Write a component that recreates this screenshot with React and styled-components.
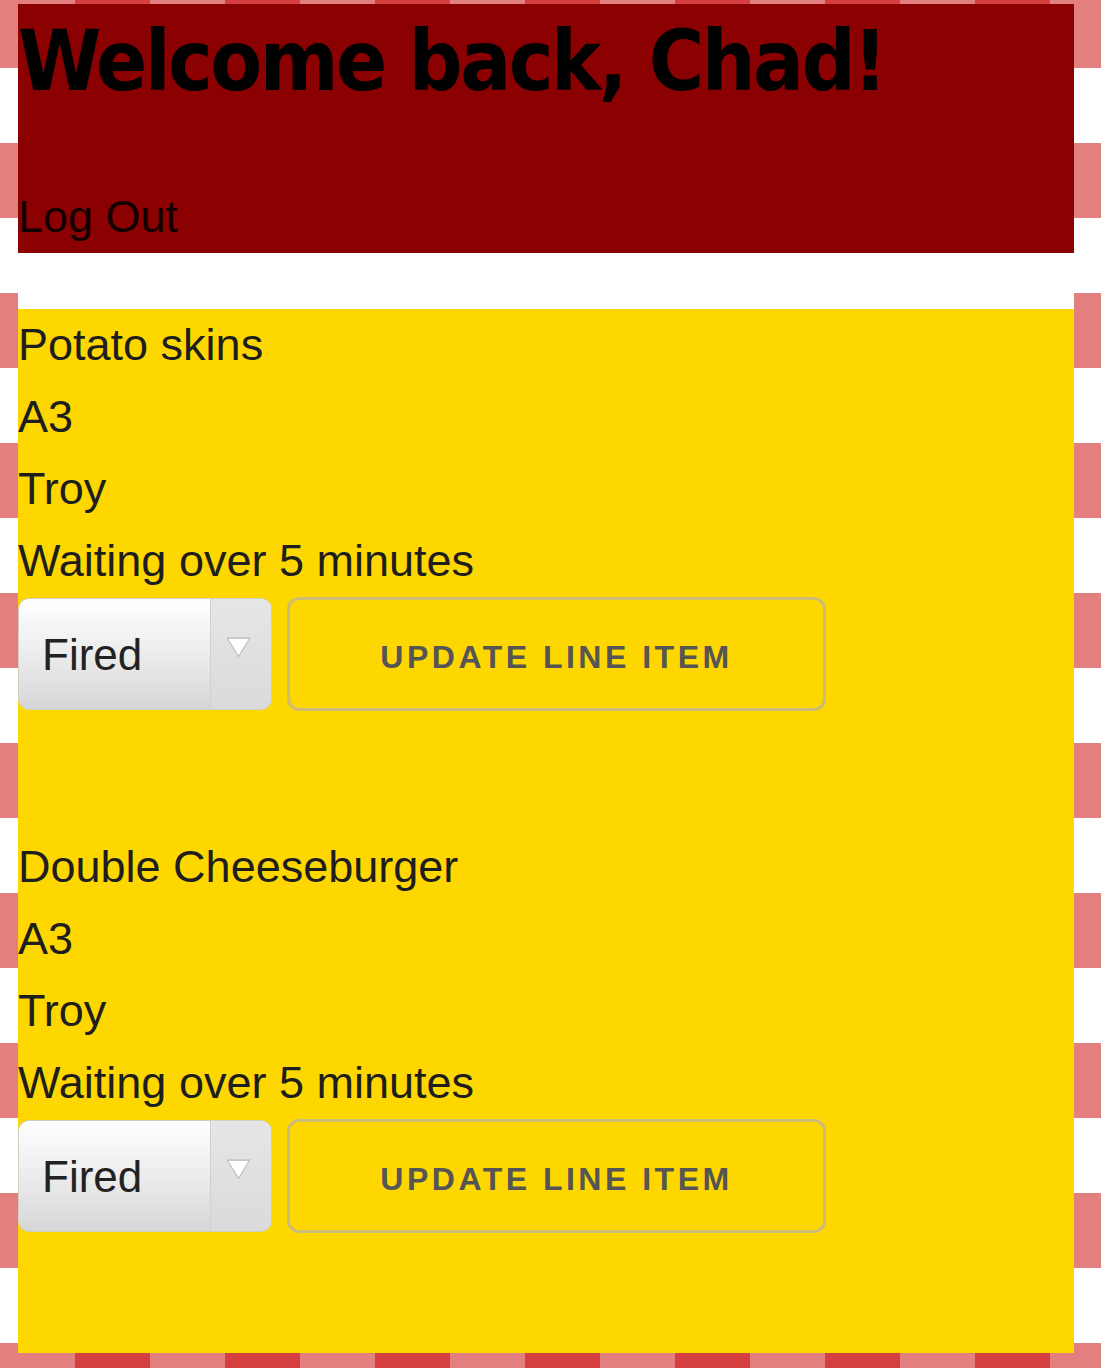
import React from 'react'
import styled, { createGlobalStyle } from 'styled-components'

const GlobalStyle = createGlobalStyle`
html {
  min-height: 100%;
  background-color: #fff;
  background-image:
    linear-gradient(to bottom, rgba(200, 0, 0, 0.5) 50%, transparent 50%),
    linear-gradient(to right, transparent 50%, rgba(200, 0, 0, 0.5) 50%);
  background-size: 150px 150px;
  background-position: 0 -7px, 0 0;
}
body {
  margin: 4px 27px 0 18px;
  font-family: "Liberation Sans", Arial, sans-serif;
}
`

const Page = styled.div`
background: #fff;
display: flex;
flex-direction: column;
gap: 56px;
`

const Header = styled.header`
background: #8b0000;
display: flex;
flex-direction: column;
align-items: flex-start;
padding: 15px 0 11px;
`

const Title = styled.h1`
margin: 0 0 89px;
font-family: "DejaVu Sans Condensed", "DejaVu Sans", sans-serif;
font-stretch: condensed;
font-weight: bold;
font-size: 84px;
line-height: 84px;
letter-spacing: -2.5px;
color: #000;
`

const LogOut = styled.a`
font-size: 45px;
line-height: 50px;
color: #110000;
text-decoration: none;
cursor: pointer;
`

const Orders = styled.section`
background: #ffd700;
display: flex;
flex-direction: column;
`

const LineItem = styled.div`
display: flex;
flex-direction: column;
padding-bottom: 120px;
`

const Field = styled.p`
margin: 0;
font-size: 45px;
line-height: 72px;
color: #1e1e1e;
`

const Controls = styled.div`
display: flex;
align-items: center;
gap: 15px;
height: 114px;
`

const SelectBox = styled.div`
position: relative;
width: 254px;
height: 112px;
`

const Select = styled.select`
appearance: none;
width: 100%;
height: 100%;
margin: 0;
padding: 0 0 0 23px;
border: 1px solid #d2cfc0;
border-radius: 11px;
background: linear-gradient(to bottom, #ffffff 0%, #ececec 50%, #d6d6d6 100%);
font-family: "Liberation Sans", Arial, sans-serif;
font-size: 44px;
color: #222;
outline: none;
`

const Arrow = styled.span`
position: absolute;
top: 1px;
right: 1px;
bottom: 1px;
width: 61px;
display: flex;
align-items: flex-start;
justify-content: center;
padding: 38px 5px 0 0;
box-sizing: border-box;
border-left: 1px solid #d0d0d0;
border-radius: 0 10px 10px 0;
background: linear-gradient(to bottom, #e6e6e6 0%, #dadada 100%);
pointer-events: none;
`

const UpdateButton = styled.button`
width: 539px;
height: 114px;
padding: 6px 0 0;
border: 3px solid #cdbd74;
border-radius: 12px;
background: transparent;
font-family: "Liberation Sans", Arial, sans-serif;
font-weight: bold;
font-size: 32px;
letter-spacing: 3.5px;
text-transform: uppercase;
color: #555;
cursor: pointer;
`

const items = [
  { id: 1, name: 'Potato skins', table: 'A3', server: 'Troy', wait: 'Waiting over 5 minutes', status: 'Fired' },
  { id: 2, name: 'Double Cheeseburger', table: 'A3', server: 'Troy', wait: 'Waiting over 5 minutes', status: 'Fired' },
]

const Triangle = () => (
  <svg width="25" height="21" viewBox="0 0 25 21">
    <polygon points="0.5,0.5 24.5,0.5 12.5,20.5" fill="#b5b5b5" />
    <polygon points="2.2,1.8 22.8,1.8 12.5,18.6" fill="#ffffff" />
  </svg>
)

const App = () => {
  return (
    <>
      <GlobalStyle />
      <Page>
        <Header>
          <Title>Welcome back, Chad!</Title>
          <LogOut>Log Out</LogOut>
        </Header>
        <Orders>
          {items.map(item => (
            <LineItem key={item.id}>
              <Field>{item.name}</Field>
              <Field>{item.table}</Field>
              <Field>{item.server}</Field>
              <Field>{item.wait}</Field>
              <Controls>
                <SelectBox>
                  <Select defaultValue={item.status}>
                    <option>Ordered</option>
                    <option>Fired</option>
                    <option>Ready</option>
                  </Select>
                  <Arrow><Triangle /></Arrow>
                </SelectBox>
                <UpdateButton>Update Line Item</UpdateButton>
              </Controls>
            </LineItem>
          ))}
        </Orders>
      </Page>
    </>
  )
}

export default App
